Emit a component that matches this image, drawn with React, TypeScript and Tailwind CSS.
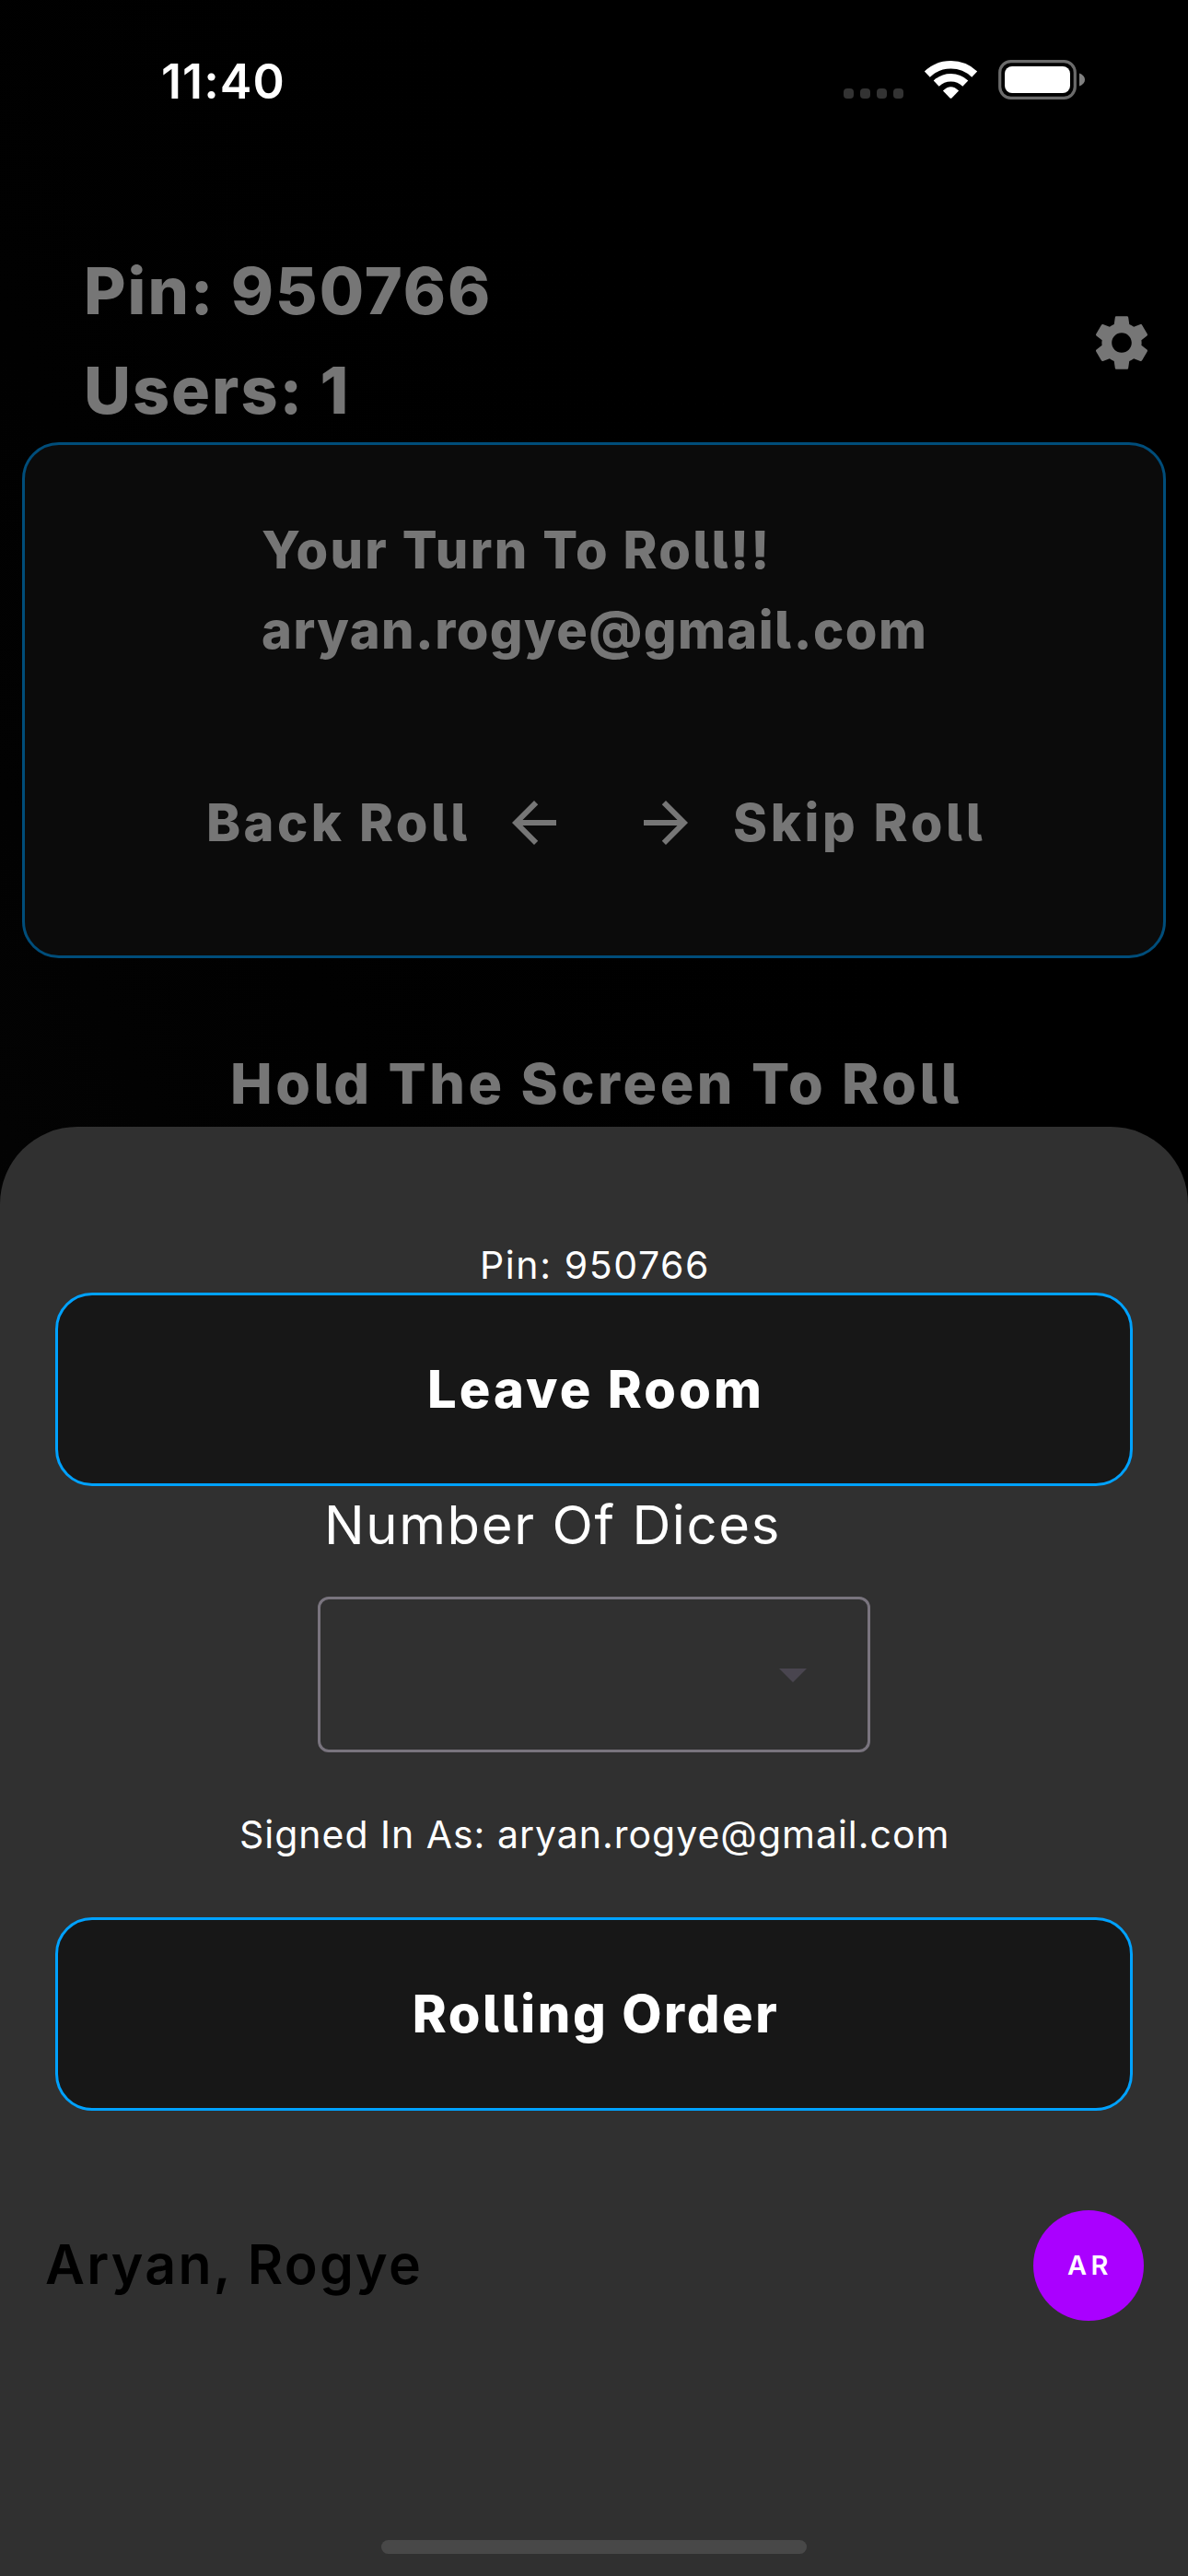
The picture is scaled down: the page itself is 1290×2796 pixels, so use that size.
import type { ReactNode } from 'react'

function StatusIcons() {
  return (
    <svg width="264" height="45" viewBox="914 64 264 45" className="mt-16 block">
      <g fill="#333333">
        <rect x="916" y="96" width="11" height="11" rx="4" />
        <rect x="934" y="96" width="11" height="11" rx="4" />
        <rect x="952" y="96" width="11" height="11" rx="4" />
        <rect x="970" y="96" width="11" height="11" rx="4" />
      </g>
      <g fill="none" stroke="#fff" strokeWidth="8.6">
        <path d="M1006.8 80.6A37.2 37.2 0 0 1 1058.2 80.6" />
        <path d="M1016.7 90.6A22.7 22.7 0 0 1 1048.3 90.6" />
      </g>
      <path d="M1023.9 98.6Q1032.5 90 1041.1 98.6L1033.4 106.4Q1032.5 107.2 1031.6 106.4Z" fill="#fff" />
      <rect x="1085.7" y="66.7" width="81.6" height="39.6" rx="12" fill="none" stroke="#6b6b6b" strokeWidth="3.2" />
      <rect x="1091" y="72" width="71" height="29" rx="8" fill="#fff" />
      <path d="M1172 79.5C1176 81 1178 83.5 1178 86.5C1178 89.5 1176 92 1172 93.5Z" fill="#808080" />
    </svg>
  )
}

function MaterialIcon({ d, className = '' }: { d: string; className?: string }) {
  return (
    <svg width="72" height="72" viewBox="0 0 24 24" fill="currentColor" className={className}>
      <path d={d} />
    </svg>
  )
}

const GEAR =
  'M19.14 12.94c.04-.3.06-.61.06-.94 0-.32-.02-.64-.07-.94l2.03-1.58a.49.49 0 0 0 .12-.61l-1.92-3.32a.488.488 0 0 0-.59-.22l-2.39.96c-.5-.38-1.03-.7-1.62-.94l-.36-2.54a.484.484 0 0 0-.48-.41h-3.84c-.24 0-.43.17-.47.41l-.36 2.54c-.59.24-1.13.57-1.62.94l-2.39-.96c-.22-.08-.47 0-.59.22L2.74 8.87c-.12.21-.08.47.12.61l2.03 1.58c-.05.3-.09.63-.09.94s.02.64.07.94l-2.03 1.58a.49.49 0 0 0-.12.61l1.92 3.32c.12.22.37.29.59.22l2.39-.96c.5.38 1.03.7 1.62.94l.36 2.54c.05.24.24.41.48.41h3.84c.24 0 .44-.17.47-.41l.36-2.54c.59-.24 1.13-.56 1.62-.94l2.39.96c.22.08.47 0 .59-.22l1.92-3.32c.12-.22.07-.47-.12-.61l-2.01-1.58zM12 15.6c-1.98 0-3.6-1.62-3.6-3.6s1.62-3.6 3.6-3.6 3.6 1.62 3.6 3.6-1.62 3.6-3.6 3.6z'
const ARROW_BACK = 'M20 11H7.83l5.59-5.59L12 4l-8 8 8 8 1.41-1.41L7.83 13H20v-2z'
const ARROW_FORWARD = 'M12 4l-1.41 1.41L16.17 11H4v2h12.17l-5.58 5.59L12 20l8-8z'
const DROP_DOWN = 'M7 10l5 5 5-5z'

function SheetButton({ className, children }: { className: string; children: ReactNode }) {
  return (
    <button
      className={`mx-[60px] flex shrink-0 items-center justify-center rounded-[40px] border-[3px] border-[#00a2ff] bg-[#171717] pl-1 text-[56px] font-extrabold leading-[72px] text-white [font-feature-settings:'cv05'] ${className}`}
    >
      {children}
    </button>
  )
}

export default function App() {
  return (
    <div className="relative flex h-[2796px] w-[1290px] flex-col overflow-hidden whitespace-nowrap bg-linear-to-bl from-black from-20% to-[#0b0b0b] font-['Inter',sans-serif] text-[#767676]">
      <div className="flex h-[262px] shrink-0 justify-between pl-[175px] pr-[112px]">
        <span className="pt-[63px] text-[52px] font-semibold leading-[52px] tracking-[1.1px] text-white">11:40</span>
        <StatusIcons />
      </div>

      <header className="flex h-[218px] shrink-0 items-start justify-between pl-[91px] pr-9 text-[70px] font-extrabold leading-[108px]">
        <div>
          <p className="tracking-[1.97px]">Pin: 950766</p>
          <p className="tracking-[1.99px]">Users: 1</p>
        </div>
        <MaterialIcon d={GEAR} className="mt-[74px]" />
      </header>

      <section className="mx-6 flex h-[560px] shrink-0 flex-col rounded-[40px] border-[3px] border-[#004d7a] bg-[#0b0b0b] pt-[71px] text-[56px] font-extrabold [font-feature-settings:'cv05']">
        <div className="ml-[257px] leading-[87px]">
          <p className="tracking-[2.3px]">Your Turn To Roll!!</p>
          <p className="tracking-[1.45px]">aryan.rogye@gmail.com</p>
        </div>
        <div className="ml-[197px] mt-[129px] flex items-center leading-[72px]">
          <span className="w-[320px] tracking-[3.4px]">Back Roll</span>
          <MaterialIcon d={ARROW_BACK} />
          <MaterialIcon d={ARROW_FORWARD} className="ml-[71px]" />
          <span className="ml-[37px] tracking-[3.7px]">Skip Roll</span>
        </div>
      </section>

      <p className="mt-[96px] pl-[250px] text-[61px] font-extrabold leading-[80px] tracking-[3.5px] [font-feature-settings:'cv05']">
        Hold The Screen To Roll
      </p>

      <div className="absolute inset-x-0 bottom-0 flex h-[1573px] flex-col rounded-t-[84px] bg-[#303030] pt-[125px] text-white">
        <p className="pl-[521px] text-[41px] leading-[50px] tracking-[1.6px]">Pin: 950766</p>
        <SheetButton className="mt-[5px] h-[210px] tracking-[3.1px]">Leave Room</SheetButton>
        <p className="mt-[7px] pl-[352px] text-[58px] leading-[70px] tracking-[1.6px]">Number Of Dices</p>
        <div className="ml-[345px] mt-[43px] flex h-[169px] w-[600px] items-center justify-end rounded-xl border-[3px] border-[#79747e] pr-[45px] text-[#49454f]">
          <MaterialIcon d={DROP_DOWN} className="-mt-0.5" />
        </div>
        <p className="mt-[64px] pl-[260px] text-[41px] leading-[50px] tracking-[0.98px]">
          Signed In As: aryan.rogye@gmail.com
        </p>
        <SheetButton className="mt-[65px] h-[210px] tracking-[2.6px]">Rolling Order</SheetButton>
        <div className="ml-[49px] mr-12 mt-[108px] flex h-[120px] items-center justify-between">
          <span className="-mt-0.5 text-[59px] font-semibold tracking-[2.26px] text-black">Aryan, Rogye</span>
          <span className="flex size-[120px] items-center justify-center rounded-full bg-[#aa00ff] pl-[3px] text-[29px] font-semibold tracking-[4.4px]">
            AR
          </span>
        </div>
        <div className="absolute bottom-6 left-[414px] h-[15px] w-[462px] rounded-full bg-[#484848]" />
      </div>
    </div>
  )
}
